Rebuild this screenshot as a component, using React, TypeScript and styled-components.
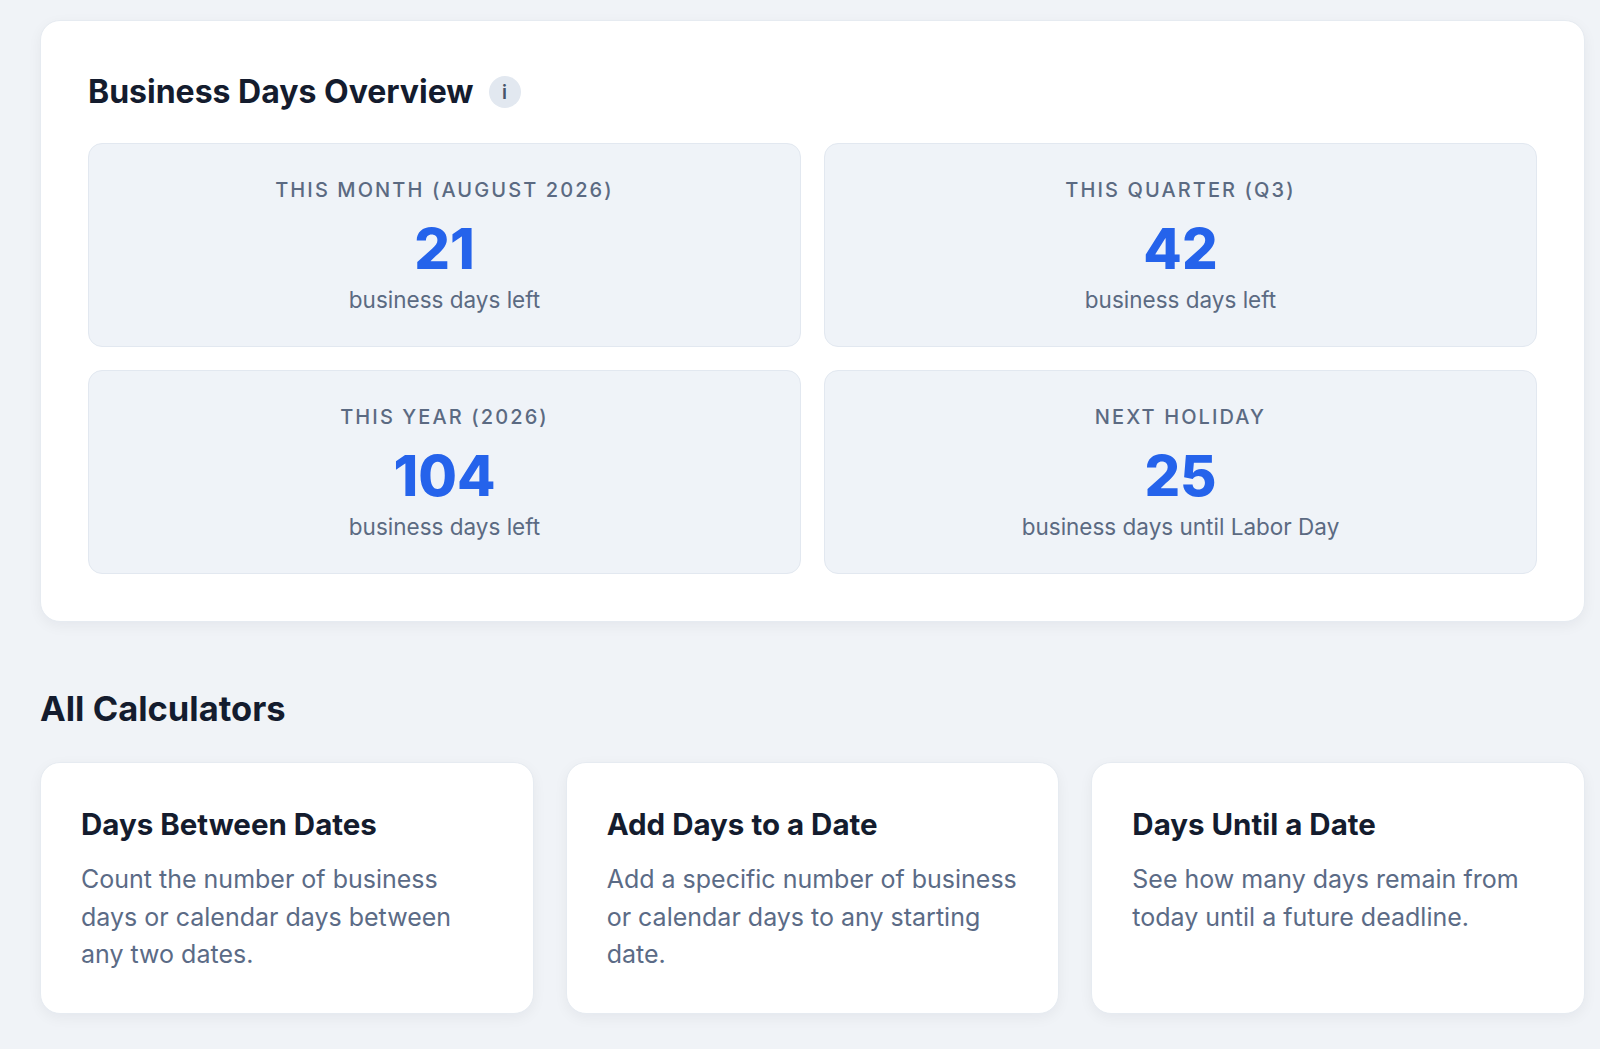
import styled, { createGlobalStyle } from "styled-components";

const GlobalStyle = createGlobalStyle`
    html, body {
        margin: 0;
        padding: 0;
        background: #f0f3f7;
    }
    body {
        font-family: Inter, "Noto Sans", "Liberation Sans", sans-serif;
        color: #0f172a;
        -webkit-font-smoothing: antialiased;
    }
    * {
        box-sizing: border-box;
    }
`;

type Stat = {
    label: string;
    value: number;
    caption: string;
};

type Calculator = {
    title: string;
    text: string;
};

const stats: Stat[] = [
    { label: "This Month (August 2026)", value: 21, caption: "business days left" },
    { label: "This Quarter (Q3)", value: 42, caption: "business days left" },
    { label: "This Year (2026)", value: 104, caption: "business days left" },
    { label: "Next Holiday", value: 25, caption: "business days until Labor Day" },
];

const calculators: Calculator[] = [
    {
        title: "Days Between Dates",
        text: "Count the number of business days or calendar days between any two dates.",
    },
    {
        title: "Add Days to a Date",
        text: "Add a specific number of business or calendar days to any starting date.",
    },
    {
        title: "Days Until a Date",
        text: "See how many days remain from today until a future deadline.",
    },
];

export default function App() {
    return (
        <>
            <GlobalStyle />
            <Page>
                <OverviewCard>
                    <OverviewHeader>
                        <OverviewTitle>Business Days Overview</OverviewTitle>
                        <InfoBadge title="How these numbers are counted">i</InfoBadge>
                    </OverviewHeader>
                    <StatGrid>
                        {stats.map((s) => (
                            <StatTile key={s.label}>
                                <StatLabel>{s.label}</StatLabel>
                                <StatValue>{s.value}</StatValue>
                                <StatCaption>{s.caption}</StatCaption>
                            </StatTile>
                        ))}
                    </StatGrid>
                </OverviewCard>

                <SectionTitle>All Calculators</SectionTitle>
                <CalcGrid>
                    {calculators.map((c) => (
                        <CalcCard key={c.title} href="#">
                            <CalcTitle>{c.title}</CalcTitle>
                            <CalcText>{c.text}</CalcText>
                        </CalcCard>
                    ))}
                </CalcGrid>
            </Page>
        </>
    );
}

const Page = styled.main`
    width: 1545px;
    margin-left: 40px;
    padding: 20px 0 24px;
`;

const OverviewCard = styled.section`
    background: #ffffff;
    border: 1px solid #e6ebf1;
    border-radius: 20px;
    box-shadow: 0 4px 14px rgba(15, 23, 42, 0.05);
    padding: 51px 47px 47px;
`;

const OverviewHeader = styled.div`
    display: flex;
    align-items: center;
    gap: 15px;
    height: 40px;
    margin-bottom: 31px;
`;

const OverviewTitle = styled.h2`
    margin: 0;
    font-size: 32px;
    font-weight: 700;
    line-height: 40px;
    color: #141c2e;
`;

const InfoBadge = styled.span`
    display: inline-flex;
    align-items: center;
    justify-content: center;
    width: 32px;
    height: 32px;
    border-radius: 50%;
    background: #e2e8f0;
    color: #475569;
    font-size: 19px;
    font-weight: 600;
    cursor: help;
`;

const StatGrid = styled.div`
    display: grid;
    grid-template-columns: repeat(2, 1fr);
    gap: 23px 23px;
`;

const StatTile = styled.div`
    display: flex;
    flex-direction: column;
    align-items: center;
    text-align: center;
    padding: 31px 24px;
    background: #eff3f8;
    border: 1px solid #e2e8f0;
    border-radius: 14px;
`;

const StatLabel = styled.div`
    font-size: 20px;
    line-height: 30px;
    font-weight: 500;
    letter-spacing: 0.105em;
    text-transform: uppercase;
    color: #5b6a82;
`;

const StatValue = styled.div`
    margin-top: 11px;
    font-size: 56px;
    line-height: 67px;
    font-weight: 800;
    color: #2563eb;
`;

const StatCaption = styled.div`
    margin-top: 2px;
    font-size: 22.5px;
    line-height: 30px;
    color: #5b6a82;
`;

const SectionTitle = styled.h2`
    margin: 66px 0 33px;
    font-size: 34.5px;
    line-height: 41px;
    font-weight: 700;
    color: #141c2e;
`;

const CalcGrid = styled.div`
    display: grid;
    grid-template-columns: repeat(3, 1fr);
    gap: 32px;
`;

const CalcCard = styled.a`
    display: block;
    padding: 42px 40px 39px;
    background: #ffffff;
    border: 1px solid #e6ebf1;
    border-radius: 20px;
    box-shadow: 0 4px 14px rgba(15, 23, 42, 0.05);
    text-decoration: none;
`;

const CalcTitle = styled.h3`
    margin: 0 0 18px;
    font-size: 29.5px;
    line-height: 38px;
    font-weight: 700;
    color: #141c2e;
`;

const CalcText = styled.p`
    margin: 0;
    font-size: 25px;
    line-height: 37.5px;
    color: #5b6b86;
`;
